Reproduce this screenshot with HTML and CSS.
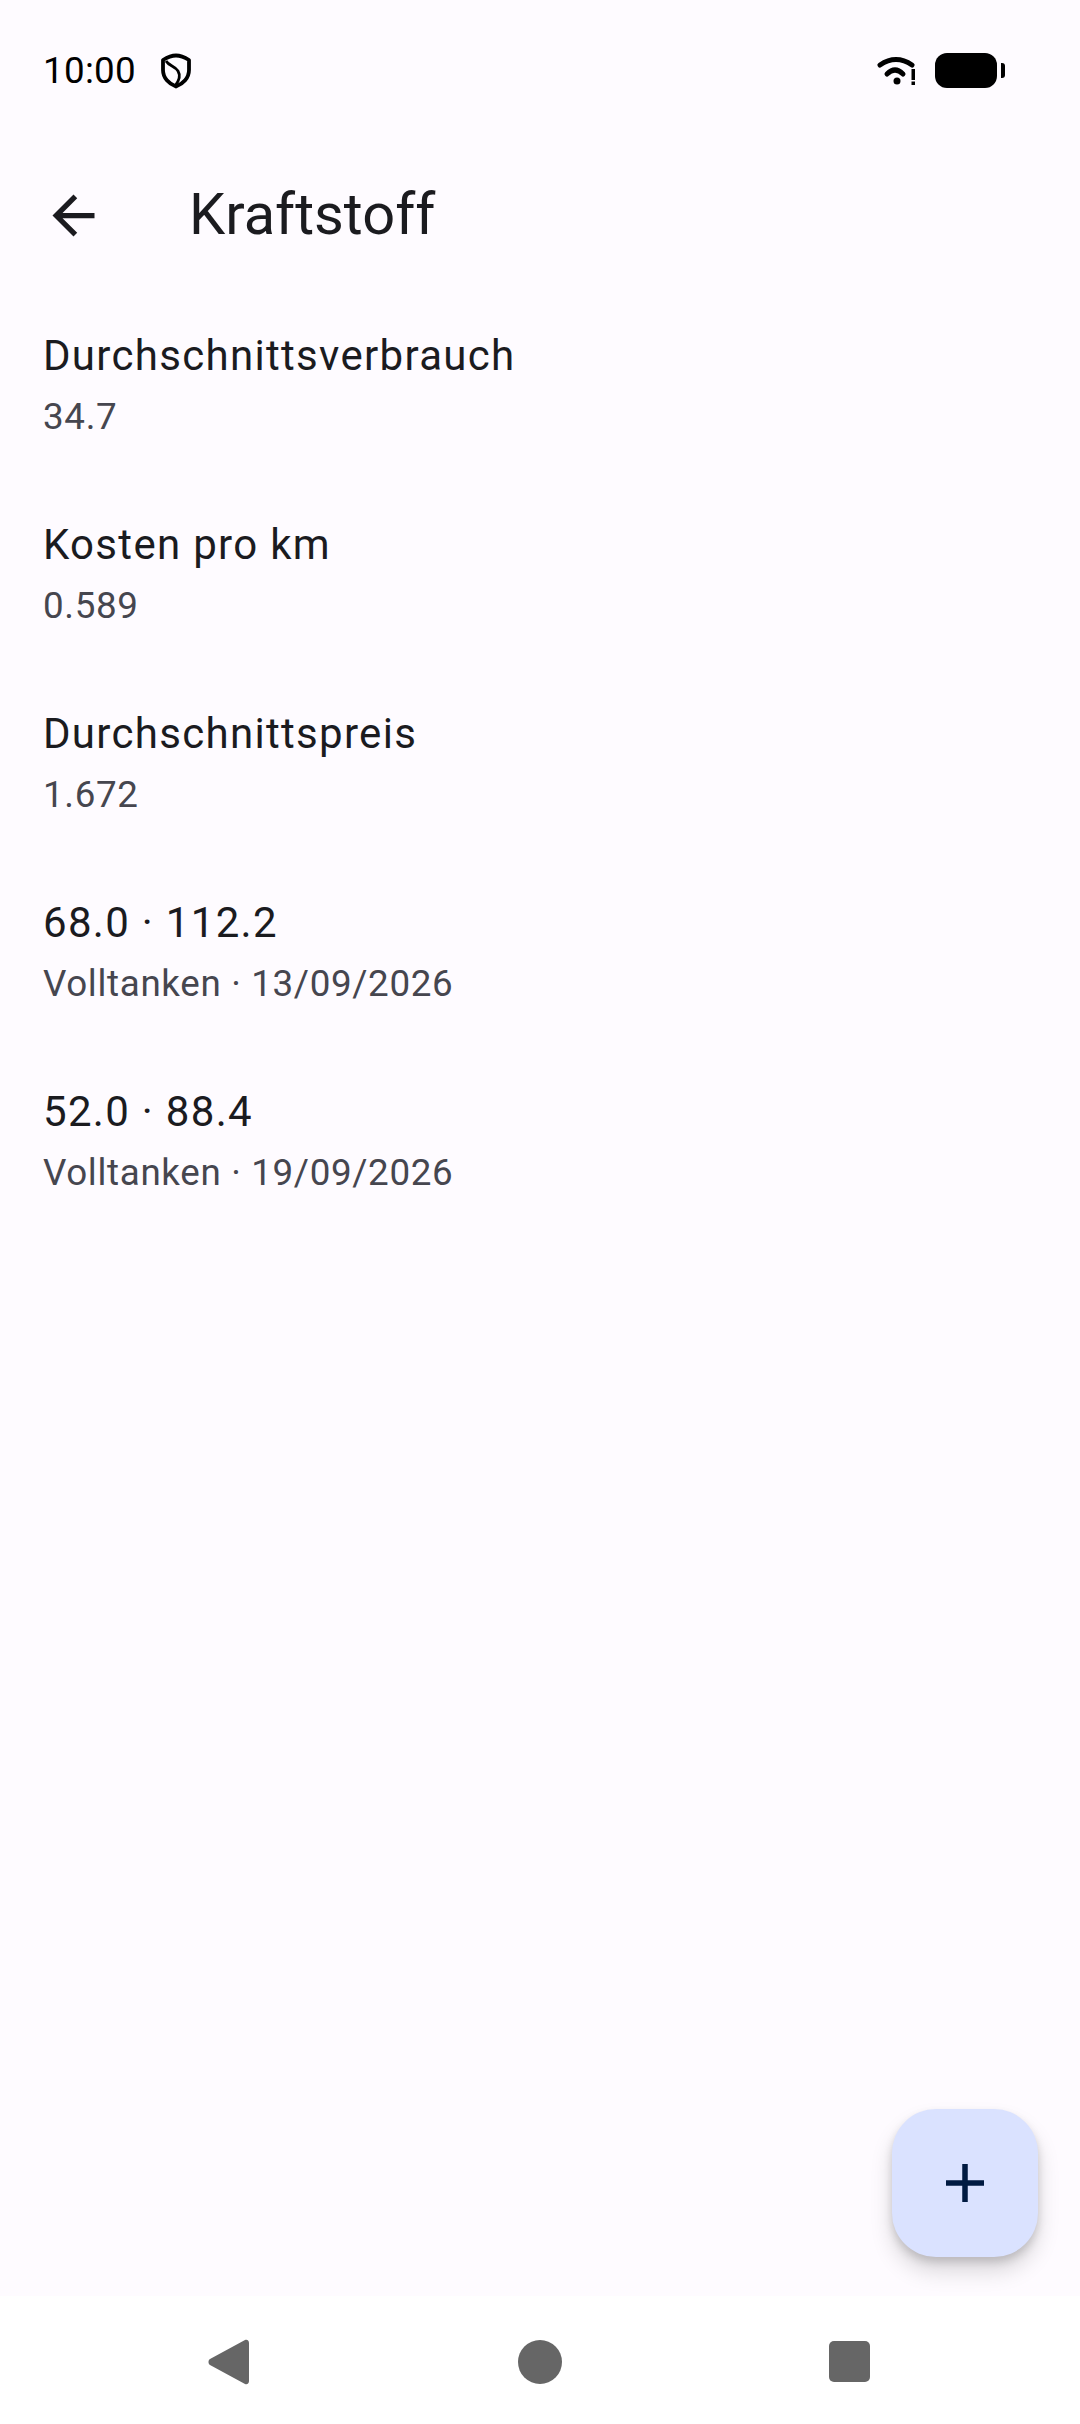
FILE: index.html
```html
<!DOCTYPE html>
<html lang="de">
<head>
    <meta charset="UTF-8">
    <meta name="viewport" content="width=device-width, initial-scale=1.0">
    <title>Kraftstoff</title>
    <link rel="stylesheet" href="styles.css">
</head>
<body>
    <div class="screen">
        <div class="status-bar">
            <div class="status-left">
                <span class="clock">10:00</span>
                <svg class="shield" width="30" height="36" viewBox="0 0 30 36">
                    <path d="M15 2.500 C19.500 2.500 24 4.500 28 7 V17 C28 25 22 31 15 33.500 C8 31 2 25 2 17 V7 C6 4.500 10.500 2.500 15 2.500 Z" fill="none" stroke="#000" stroke-width="3.800" stroke-linejoin="round"/>
                    <path d="M5 8 C8 13 14 13 17 18 C20 23 18 28 14 33" fill="none" stroke="#000" stroke-width="2.800"/>
                </svg>
            </div>
            <div class="status-right">
                <svg class="wifi" width="38" height="29" viewBox="0 0 38 29">
                    <path d="M3 9 Q19 -2 35 9" fill="none" stroke="#000" stroke-width="5" stroke-linecap="round"/>
                    <path d="M10 18 Q18 10 26 18" fill="none" stroke="#000" stroke-width="5" stroke-linecap="round"/>
                    <circle cx="20" cy="25" r="3.500" fill="#000"/>
                    <rect x="34.500" y="13" width="3.500" height="11" fill="#000"/>
                    <rect x="34.500" y="25.500" width="3.500" height="3.500" fill="#000"/>
                </svg>
                <div class="battery">
                    <div class="battery-body"></div>
                    <div class="battery-tip"></div>
                </div>
            </div>
        </div>

        <div class="app-bar">
            <button class="back-btn">
                <svg width="63" height="63" viewBox="0 0 24 24">
                    <path d="M20 11H7.830l5.590-5.590L12 4l-8 8 8 8 1.410-1.410L7.830 13H20v-2z" fill="#1b1b1f"/>
                </svg>
            </button>
            <div class="app-title">Kraftstoff</div>
        </div>

        <div class="list">
            <div class="list-item">
                <div class="item-title">Durchschnittsverbrauch</div>
                <div class="item-sub">34.7</div>
            </div>
            <div class="list-item">
                <div class="item-title">Kosten pro km</div>
                <div class="item-sub">0.589</div>
            </div>
            <div class="list-item">
                <div class="item-title">Durchschnittspreis</div>
                <div class="item-sub">1.672</div>
            </div>
            <div class="list-item">
                <div class="item-title">68.0 · 112.2</div>
                <div class="item-sub">Volltanken · 13/09/2026</div>
            </div>
            <div class="list-item">
                <div class="item-title">52.0 · 88.4</div>
                <div class="item-sub">Volltanken · 19/09/2026</div>
            </div>
        </div>

        <button class="fab">
            <svg width="38" height="38" viewBox="0 0 38 38">
                <path d="M19 0 V38 M0 19 H38" fill="none" stroke="#001a41" stroke-width="5.500"/>
            </svg>
        </button>

        <div class="nav-bar">
            <svg class="nav-back" width="42" height="46" viewBox="0 0 42 46">
                <path d="M37 1 C39.500 0 41 2 41 4 V42 C41 44 39.500 46 37 45 L2 26 C0 25 0 21 2 20 Z" fill="#666"/>
            </svg>
            <div class="nav-home"></div>
            <div class="nav-recent"></div>
        </div>
    </div>
</body>
</html>
```

FILE: styles.css
```css
* {
    box-sizing: border-box;
}
body {
    margin: 0;
    padding: 0;
    font-family: Roboto, "Liberation Sans", sans-serif;
    background-color: #fefbff;
}
.screen {
    position: relative;
    display: flex;
    flex-direction: column;
    width: 1080px;
    height: 2424px;
    overflow: hidden;
    background-color: #fefbff;
}
.status-bar {
    display: flex;
    align-items: center;
    justify-content: space-between;
    height: 141px;
    padding: 0 75px 0 43px;
}
.status-left {
    display: flex;
    align-items: center;
    gap: 25px;
}
.clock {
    font-size: 36.750px;
    letter-spacing: 0.300px;
    color: #000;
}
.status-right {
    display: flex;
    align-items: center;
    gap: 20px;
}
.battery {
    display: flex;
    align-items: center;
    gap: 4px;
}
.battery-body {
    width: 62px;
    height: 35px;
    background-color: #000;
    border-radius: 12px;
}
.battery-tip {
    width: 4px;
    height: 15px;
    background-color: #000;
    border-radius: 0 3px 3px 0;
}
.app-bar {
    display: flex;
    align-items: center;
    height: 148px;
    padding-left: 42px;
}
.back-btn {
    display: flex;
    width: 63px;
    height: 63px;
    padding: 0;
    margin-right: 84px;
    background: none;
    border: none;
}
.app-title {
    margin-bottom: 2px;
    font-size: 57.750px;
    color: #1b1b1f;
}
.list {
    flex: 1;
}
.list-item {
    height: 189px;
    padding: 35px 43px 0;
}
.item-title {
    font-size: 42px;
    line-height: 63px;
    letter-spacing: 1.310px;
    color: #1b1b1f;
}
.item-sub {
    margin-top: 3px;
    font-size: 36.750px;
    line-height: 53px;
    letter-spacing: 0.660px;
    color: #46464f;
}
.fab {
    position: absolute;
    left: 892px;
    top: 2109px;
    display: flex;
    align-items: center;
    justify-content: center;
    width: 146px;
    height: 148px;
    padding: 0;
    background-color: #dae2ff;
    border: none;
    border-radius: 44px;
    box-shadow: 0 14px 22px rgba(0, 0, 0, 0.15), 0 5px 8px rgba(0, 0, 0, 0.15);
}
.nav-bar {
    display: flex;
    align-items: center;
    height: 128px;
    background-color: #fff;
    padding: 3px 0 0 208px;
}
.nav-back {
    margin-right: 268px;
}
.nav-home {
    width: 44px;
    height: 44px;
    background-color: #666;
    border-radius: 50%;
    margin-right: 267px;
}
.nav-recent {
    width: 41px;
    height: 41px;
    background-color: #666;
    border-radius: 5px;
}
```
